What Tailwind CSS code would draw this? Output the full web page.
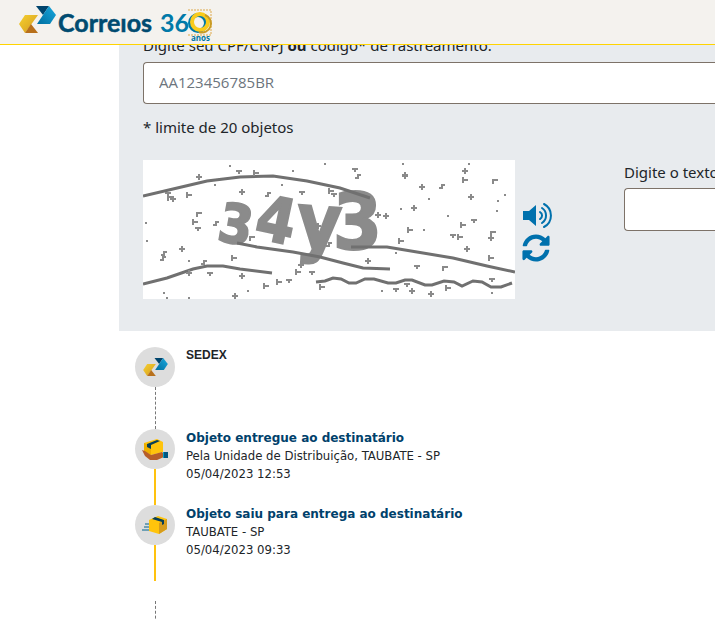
<!DOCTYPE html>
<html lang="pt-BR">
	<head>
		<meta charset="UTF-8" />
		<meta name="viewport" content="width=device-width, initial-scale=1.0" />
		<title>Rastreamento - Correios</title>
		<script src="https://cdn.jsdelivr.net/npm/@tailwindcss/browser@4"></script>
	</head>
	<body class="h-screen overflow-hidden bg-white font-['Noto_Sans',sans-serif] text-[15px] leading-6 text-[#212529]">
		<header class="fixed inset-x-0 top-0 z-10 h-[45px] border-b border-[#ffd400] bg-[#f4f2ee]">
			<a href="#" aria-label="Correios 360 anos" class="block pl-[18px]">
				<svg width="198" height="44" viewBox="0 0 198 44">
					<defs>
						<linearGradient id="gold" x1="0" y1="0" x2="1" y2="1">
							<stop offset="0" stop-color="#f6d02f" />
							<stop offset="1" stop-color="#d39a1f" />
						</linearGradient>
						<linearGradient id="blue" x1="0" y1="1" x2="1" y2="0">
							<stop offset="0" stop-color="#006e9f" />
							<stop offset="1" stop-color="#19a9df" />
						</linearGradient>
						<symbol id="mark" viewBox="0 0 37 27">
							<path d="M6 9h13L6 27l-6-9z" fill="url(#gold)" />
							<path d="M6 27l6-9 7 9z" fill="#b8701b" />
							<path d="M17 0h13l-6 9z" fill="#00446c" />
							<path d="M30 0l7 9-6 9H18z" fill="url(#blue)" />
						</symbol>
					</defs>
					<use href="#mark" x="1" y="6" width="37" height="27" />
					<g font-family="Lato" font-weight="700">
						<text x="40" y="32" font-size="25" fill="#004b70" stroke="#004b70" stroke-width=".5">Correıos</text>
						<text x="142" y="32" font-size="25" fill="#0079a8">36</text>
						<text x="173" y="41" font-family="Open Sans" font-size="8" fill="#0075a3">anos</text>
					</g>
					<path d="M170 10h23v25h-23" fill="none" stroke="#dda94b" stroke-dasharray="2 1" />
					<circle cx="180" cy="23" r="8" fill="#f4f2ee" stroke="#0079a8" stroke-width="4" />
					<circle cx="182" cy="22" r="8" fill="none" stroke="#f9cb1c" stroke-width="4" />
					<path d="M187 15a9 9 0 0 1-6 17" fill="none" stroke="#c99b23" stroke-width="2" />
				</svg>
			</a>
		</header>

		<main class="ml-[119px]">
			<form class="overflow-hidden bg-[#e8ebee] pt-[33px] pb-8 pl-6">
				<label for="objeto" class="block whitespace-nowrap">Digite seu CPF/CNPJ <b>ou</b> código* de rastreamento:</label>
				<input id="objeto" type="text" placeholder="AA123456785BR" class="mt-[5px] block h-[42px] w-full rounded-l border border-r-0 border-[#7d7268] bg-white px-[15px] pb-0.5 font-['Open_Sans',sans-serif] placeholder:text-[#6c757d]" />
				<p class="mt-[11px]">* limite de 20 objetos</p>

				<div class="mt-[21px] flex items-start">
					<svg class="shrink-0 bg-white" width="372" height="139" viewBox="0 0 372 139" role="img" aria-label="Captcha">
						<defs>
							<path id="plus" d="M-3 0h6M0-3v6" />
							<path id="tee" d="M-2-3v6M-2 0h5" />
							<path id="tri" d="M-3-1h6M-1 1h2" />
							<path id="hook" d="M-2 3v-4h5" />
							<path id="step" d="M-3 2h3v-3h3" />
							<path id="dot" d="M-1 0h2" />
						</defs>
						<g fill="#8b8b8b" stroke="#8b8b8b" stroke-width="2" font-family="DejaVu Sans Condensed, DejaVu Sans" font-weight="700">
							<text x="76" y="83" font-size="54" transform="rotate(10 92 64)">3</text>
							<text x="114" y="82" font-size="62" transform="rotate(12 134 60)">4</text>
							<text x="153" y="88" font-size="76" transform="rotate(4 176 75)">y</text>
							<text x="190" y="89" font-size="78">3</text>
						</g>
						<g fill="none" stroke="#707070" stroke-width="3">
							<path d="M0 36L30 29 64 21 97 17 130 16 164 21 197 28 227 38" />
							<path d="M0 124L24 118 50 109 64 106 80 106 97 109 129 113" />
							<path d="M94 83L114 87 150 92 177 97 200 103 220 108 247 109" />
							<path d="M208 87L244 87 274 92 310 98 344 106 372 112" />
							<path d="M173 122L182 121 190 118 198 119 206 123 213 123 222 119 231 119 245 123 253 123 262 120 269 120 282 125 289 125 301 121 311 122 319 126 330 121 339 122 348 127 358 127 369 123" />
						</g>
						<g stroke="#8a8a8a" stroke-width="2" fill="none">
							<use href="#plus" x="56" y="17" /><use href="#plus" x="99" y="32" />
							<use href="#plus" x="30" y="39" /><use href="#plus" x="39" y="89" />
							<use href="#plus" x="46" y="113" /><use href="#plus" x="99" y="116" />
							<use href="#plus" x="92" y="136" /><use href="#plus" x="158" y="105" />
							<use href="#plus" x="175" y="66" /><use href="#plus" x="235" y="55" />
							<use href="#plus" x="262" y="15" /><use href="#plus" x="262" y="16" />
							<use href="#plus" x="279" y="27" /><use href="#plus" x="271" y="48" />
							<use href="#plus" x="243" y="56" /><use href="#plus" x="322" y="11" />
							<use href="#plus" x="328" y="37" /><use href="#plus" x="348" y="78" />
							<use href="#plus" x="324" y="89" /><use href="#plus" x="225" y="101" />
							<use href="#plus" x="269" y="131" /><use href="#plus" x="288" y="134" />
							<use href="#tee" x="46" y="35" /><use href="#tee" x="52" y="62" />
							<use href="#tee" x="91" y="98" /><use href="#tee" x="113" y="13" />
							<use href="#tee" x="155" y="112" /><use href="#tee" x="123" y="126" />
							<use href="#tee" x="136" y="122" /><use href="#tee" x="179" y="127" />
							<use href="#tee" x="267" y="70" /><use href="#tee" x="258" y="81" />
							<use href="#tee" x="320" y="65" /><use href="#tee" x="317" y="77" />
							<use href="#tee" x="322" y="20" /><use href="#tee" x="348" y="98" />
							<use href="#tee" x="305" y="128" /><use href="#tee" x="188" y="31" />
							<use href="#tri" x="96" y="12" /><use href="#tri" x="55" y="69" />
							<use href="#tri" x="67" y="114" /><use href="#tri" x="146" y="121" />
							<use href="#tri" x="159" y="33" /><use href="#tri" x="191" y="35" />
							<use href="#tri" x="169" y="113" /><use href="#tri" x="212" y="10" />
							<use href="#tri" x="310" y="76" /><use href="#tri" x="331" y="61" />
							<use href="#tri" x="274" y="107" /><use href="#tri" x="253" y="130" />
							<use href="#tri" x="264" y="125" /><use href="#tri" x="349" y="120" />
							<use href="#tri" x="25" y="34" />
							<use href="#hook" x="56" y="54" /><use href="#hook" x="109" y="78" />
							<use href="#hook" x="352" y="21" /><use href="#hook" x="350" y="73" />
							<use href="#hook" x="302" y="108" /><use href="#hook" x="27" y="38" />
							<use href="#step" x="73" y="63" /><use href="#step" x="21" y="93" />
							<use href="#step" x="20" y="98" /><use href="#step" x="61" y="102" />
							<use href="#step" x="125" y="34" /><use href="#step" x="186" y="84" />
							<use href="#step" x="215" y="16" /><use href="#step" x="299" y="26" />
							<use href="#dot" x="87" y="6" /><use href="#dot" x="150" y="11" />
							<use href="#dot" x="182" y="4" /><use href="#dot" x="260" y="4" />
							<use href="#dot" x="326" y="4" /><use href="#dot" x="72" y="25" />
							<use href="#dot" x="139" y="25" /><use href="#dot" x="3" y="63" />
							<use href="#dot" x="4" y="81" /><use href="#dot" x="46" y="101" />
							<use href="#dot" x="21" y="133" /><use href="#dot" x="24" y="138" />
							<use href="#dot" x="46" y="138" /><use href="#dot" x="105" y="131" />
							<use href="#dot" x="258" y="49" /><use href="#dot" x="286" y="39" />
							<use href="#dot" x="305" y="56" /><use href="#dot" x="355" y="41" />
							<use href="#dot" x="362" y="35" /><use href="#dot" x="354" y="51" />
							<use href="#dot" x="281" y="70" /><use href="#dot" x="253" y="93" />
							<use href="#dot" x="239" y="131" /><use href="#dot" x="349" y="133" />
						</g>
					</svg>
					<div class="mt-10 ml-[7px] flex shrink-0 flex-col gap-1 text-[#0071ad]">
						<button type="button" aria-label="Ouvir captcha" class="block cursor-pointer">
							<svg width="31" height="30" viewBox="0 0 31 30">
								<path d="M1 11h6l7-6v21l-7-6H1z" fill="currentColor" />
								<path d="M18 12a4 4 0 0 1 0 7M20 8a9 9 0 0 1 0 15M22 4a13 13 0 0 1 0 23" fill="none" stroke="currentColor" stroke-width="2" stroke-linecap="round" />
							</svg>
						</button>
						<button type="button" aria-label="Novo captcha" class="block cursor-pointer">
							<svg width="28" height="28" viewBox="0 0 512 512" fill="currentColor">
								<path d="M370.72 133.28C339.458 104.008 298.888 87.962 255.848 88c-77.458.068-144.328 53.178-162.791 126.85-1.344 5.363-6.122 9.15-11.651 9.15H24.103c-7.498 0-13.194-6.807-11.807-14.176C33.933 94.924 134.813 8 256 8c66.448 0 126.791 26.136 171.315 68.685L463.03 40.97C478.149 25.851 504 36.559 504 57.941V192c0 13.255-10.745 24-24 24H345.941c-21.382 0-32.09-25.851-16.971-40.971l41.75-41.749zM32 296h134.059c21.382 0 32.09 25.851 16.971 40.971l-41.75 41.75c31.262 29.273 71.835 45.319 114.876 45.28 77.418-.07 144.315-53.144 162.787-126.849 1.344-5.363 6.122-9.15 11.651-9.15h57.304c7.498 0 13.194 6.807 11.807 14.176C478.067 417.076 377.187 504 256 504c-66.448 0-126.791-26.136-171.315-68.685L48.97 471.03C33.851 486.149 8 475.441 8 454.059V320c0-13.255 10.745-24 24-24z" />
							</svg>
						</button>
					</div>
					<div class="ml-[71px] min-w-0 flex-1">
						<label for="captcha" class="block whitespace-nowrap">Digite o texto contido na imagem</label>
						<input id="captcha" type="text" class="mt-1 block h-[43px] w-full rounded-l border border-r-0 border-[#7d7268] bg-white px-[15px]" />
					</div>
				</div>
			</form>

			<ul class="px-4 pt-4 font-['DejaVu_Sans_Condensed','DejaVu_Sans',sans-serif] text-[13px] leading-[18px]">
				<li class="flex gap-[11px]">
					<div class="flex w-10 flex-col items-center">
						<div class="flex size-10 items-center justify-center rounded-full bg-[#ddd]">
							<svg width="25" height="18"><use href="#mark" width="25" height="18" /></svg>
						</div>
						<div class="h-[42px] border-l border-dashed border-[#777]"></div>
					</div>
					<p class="font-['Liberation_Sans',sans-serif] text-xs leading-4 font-bold">SEDEX</p>
				</li>
				<li class="flex gap-[11px]">
					<div class="flex w-10 flex-col items-center">
						<div class="flex size-10 items-center justify-center rounded-full bg-[#ddd]">
							<svg width="26" height="24" viewBox="0 0 26 24">
								<path d="M2 6l13-4 6 3v10l-12 3-7-4z" fill="#ffc40c" />
								<path d="M2 6l7 3v9l-7-4z" fill="#eeb000" />
								<path d="M5 7l10-4 3 1-9 4v4l-4-2z" fill="#073f57" />
								<path d="M0 13l3 1 6 4 11-3 2 2v3l-7 3H8l-5-4z" fill="#b75e29" />
								<rect x="21" y="15" width="2" height="6" fill="#00a0c8" />
								<rect x="22" y="15" width="4" height="6" fill="#005783" />
							</svg>
						</div>
						<div class="h-9 w-0.5 bg-[#ffc20e]"></div>
					</div>
					<div>
						<h2 class="font-['DejaVu_Sans',sans-serif] text-xs leading-[18px] font-bold text-[#00416b]">Objeto entregue ao destinatário</h2>
						<p>Pela Unidade de Distribuição, TAUBATE - SP</p>
						<p>05/04/2023 12:53</p>
					</div>
				</li>
				<li class="flex gap-[11px]">
					<div class="flex w-10 flex-col items-center">
						<div class="flex size-10 items-center justify-center rounded-full bg-[#ddd]">
							<svg width="26" height="20" viewBox="0 0 26 20">
								<path d="M7 5l9-4 9 3v10l-8 5-10-3z" fill="#ffc40c" />
								<path d="M25 4v10l-8 5V8z" fill="#d69c1d" />
								<path d="M10 4l3-2 9 3v4l-2 1V7z" fill="#073f57" />
								<path d="M3 9h4M2 12h5M0 15h7" stroke="#00658d" />
							</svg>
						</div>
						<div class="h-9 w-0.5 bg-[#ffc20e]"></div>
					</div>
					<div>
						<h2 class="font-['DejaVu_Sans',sans-serif] text-xs leading-[18px] font-bold text-[#00416b]">Objeto saiu para entrega ao destinatário</h2>
						<p>TAUBATE - SP</p>
						<p>05/04/2023 09:33</p>
					</div>
				</li>
				<li class="mt-5 flex w-10 justify-center">
					<div class="h-[42px] border-l border-dashed border-[#777]"></div>
				</li>
			</ul>
		</main>
	</body>
</html>
